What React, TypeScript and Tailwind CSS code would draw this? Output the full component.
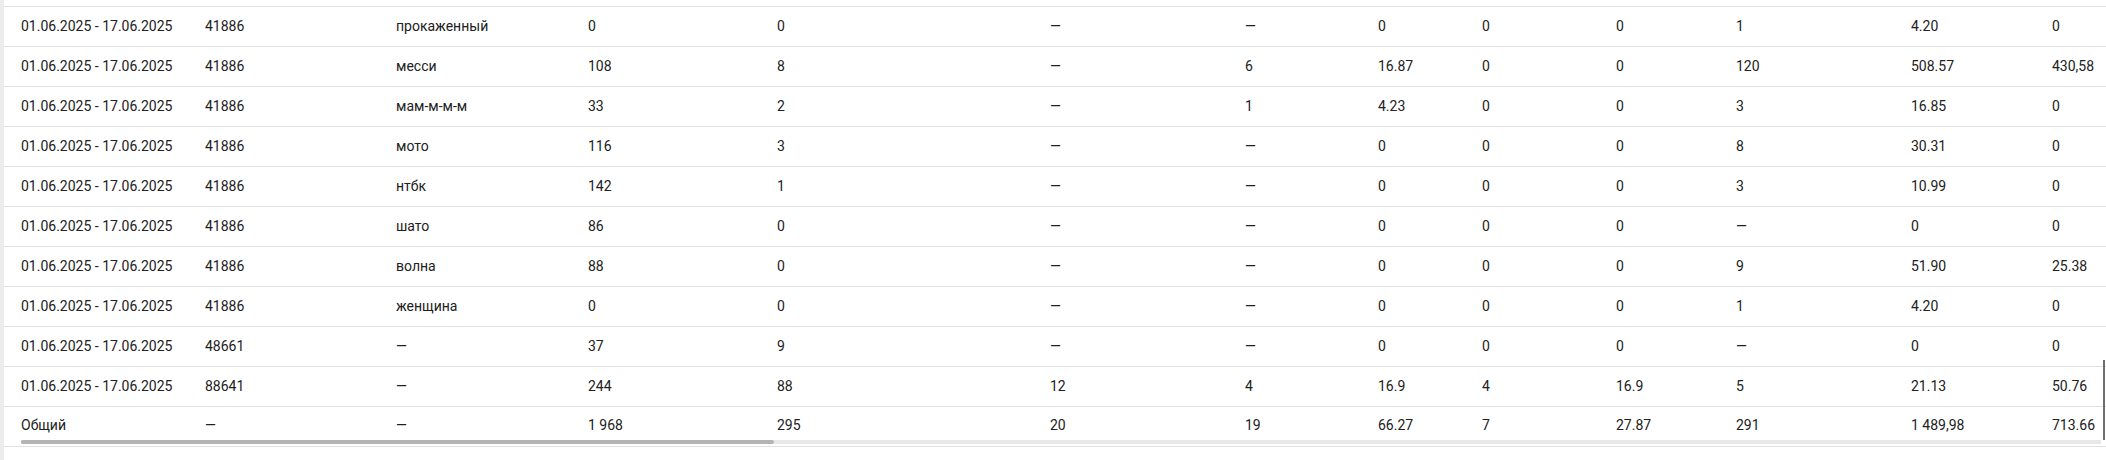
import React from 'react';

type Row = string[];

const rows: Row[] = [
  ['01.06.2025 - 17.06.2025', '41886', 'прокаженный', '0', '0', '—', '—', '0', '0', '0', '1', '4.20', '0'],
  ['01.06.2025 - 17.06.2025', '41886', 'месси', '108', '8', '—', '6', '16.87', '0', '0', '120', '508.57', '430,58'],
  ['01.06.2025 - 17.06.2025', '41886', 'мам-м-м-м', '33', '2', '—', '1', '4.23', '0', '0', '3', '16.85', '0'],
  ['01.06.2025 - 17.06.2025', '41886', 'мото', '116', '3', '—', '—', '0', '0', '0', '8', '30.31', '0'],
  ['01.06.2025 - 17.06.2025', '41886', 'нтбк', '142', '1', '—', '—', '0', '0', '0', '3', '10.99', '0'],
  ['01.06.2025 - 17.06.2025', '41886', 'шато', '86', '0', '—', '—', '0', '0', '0', '—', '0', '0'],
  ['01.06.2025 - 17.06.2025', '41886', 'волна', '88', '0', '—', '—', '0', '0', '0', '9', '51.90', '25.38'],
  ['01.06.2025 - 17.06.2025', '41886', 'женщина', '0', '0', '—', '—', '0', '0', '0', '1', '4.20', '0'],
  ['01.06.2025 - 17.06.2025', '48661', '—', '37', '9', '—', '—', '0', '0', '0', '—', '0', '0'],
  ['01.06.2025 - 17.06.2025', '88641', '—', '244', '88', '12', '4', '16.9', '4', '16.9', '5', '21.13', '50.76'],
];

const total: Row = ['Общий', '—', '—', '1 968', '295', '20', '19', '66.27', '7', '27.87', '291', '1 489,98', '713.66'];

const gridCols =
  'grid grid-cols-[185px_191px_192px_189px_273px_195px_133px_104px_134px_120px_175px_141px_220px]';

const Cells: React.FC<{ row: Row }> = ({ row }) => (
  <>
    {row.map((c, i) => (
      <div key={i} className={`${i === 0 ? 'pl-[17px]' : 'pl-4'} whitespace-nowrap`}>
        {c}
      </div>
    ))}
  </>
);

export default function App() {
  return (
    <div
      className="flex w-[2106px] h-[460px] bg-white text-[14px] text-[#212121] overflow-hidden"
      style={{ fontFamily: 'Roboto, "Noto Sans", sans-serif' }}
    >
      <div className="w-[4px] shrink-0 bg-[#ececec]" />
      <div className="relative flex-1 min-w-0 overflow-hidden">
        <div className="h-[7px] border-b border-[#e0e0e0]" />
        {rows.map((r, i) => (
          <div key={i} className={`${gridCols} h-[40px] items-center border-b border-[#e0e0e0]`}>
            <Cells row={r} />
          </div>
        ))}
        <div className="flex flex-col h-[40px] border-b border-[#e0e0e0]">
          <div className={`${gridCols} h-[33px] items-center pt-[4px]`}>
            <Cells row={total} />
          </div>
          <div className="ml-[17px] mr-[5px] h-[4px] bg-[#e8e8e8]">
            <div className="h-full w-[753px] rounded-full bg-[#b4b4b4]" />
          </div>
        </div>
        <div className="absolute right-[1px] top-[360px] h-[80px] w-[2px] bg-[#6f6f6f]" />
      </div>
    </div>
  );
}
